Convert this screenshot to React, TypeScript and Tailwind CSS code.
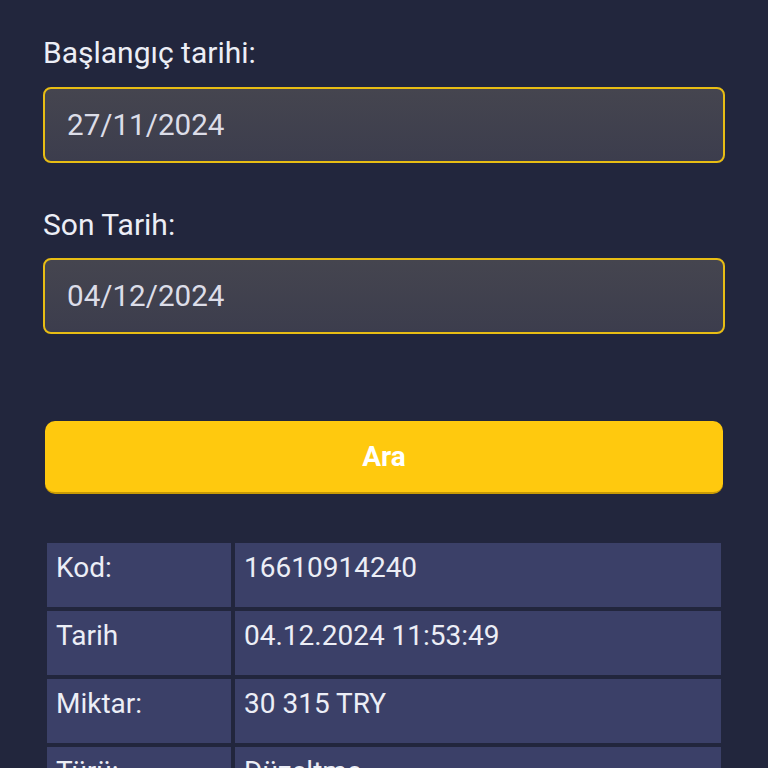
import React from "react";

const rows: [string, string][] = [
  ["Kod:", "16610914240"],
  ["Tarih", "04.12.2024 11:53:49"],
  ["Miktar:", "30 315 TRY"],
  ["Türü:", "Düzeltme"],
];

export default function App() {
  return (
    <div
      className="min-h-screen w-full bg-[#22263d] px-[43px] pt-[31px] overflow-hidden"
      style={{ fontFamily: "Roboto, 'Noto Sans', sans-serif" }}
    >
      <div className="h-[737px] overflow-hidden">
        <label className="block text-[30px] leading-[44px] text-[#eceef6]">Başlangıç tarihi:</label>
        <div className="mt-[12px] flex h-[76px] items-center rounded-[8px] border-2 border-[#e8bd14] bg-gradient-to-b from-[#45454f] to-[#3c3d4d] px-[22px]">
          <span className="text-[29.6px] text-[#dcdde8]">27/11/2024</span>
        </div>
        <label className="mt-[40px] block text-[30px] leading-[44px] text-[#eceef6]">Son Tarih:</label>
        <div className="mt-[11px] flex h-[76px] items-center rounded-[8px] border-2 border-[#e8bd14] bg-gradient-to-b from-[#45454f] to-[#3c3d4d] px-[22px]">
          <span className="text-[29.6px] text-[#dcdde8]">04/12/2024</span>
        </div>
        <button className="mx-[2px] mt-[87px] flex h-[73px] w-[calc(100%-4px)] items-center justify-center rounded-[10px] border-b-2 border-[#c99b05] bg-[#ffc90e] text-[28px] font-bold text-white">
          Ara
        </button>
        <table className="mt-[45px] w-full border-separate border-spacing-[4px]">
          <tbody>
            {rows.map(([k, v]) => (
              <tr key={k}>
                <td className="h-[64px] w-[184px] bg-[#3b4068] px-[9px] pt-[7px] align-top text-[28px] leading-[36px] text-[#eceef6]">
                  {k}
                </td>
                <td className="h-[64px] bg-[#3b4068] px-[9px] pt-[7px] align-top text-[28px] leading-[36px] text-[#eceef6]">
                  {v}
                </td>
              </tr>
            ))}
          </tbody>
        </table>
      </div>
    </div>
  );
}
